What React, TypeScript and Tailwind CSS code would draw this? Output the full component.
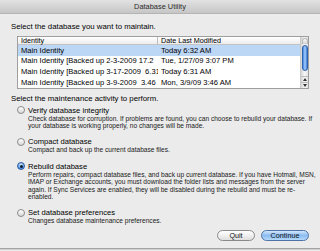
import React from "react";

function Radio({ checked }: { checked?: boolean }) {
  if (checked) {
    return (
      <span className="w-[8px] h-[8px] rounded-full border border-[#2f5c9e] bg-[radial-gradient(circle_at_50%_30%,#d4ebff,#4a8fe4_75%)] flex items-center justify-center shrink-0">
        <span className="w-[3px] h-[3px] rounded-full bg-[#0d1c33]" />
      </span>
    );
  }
  return (
    <span className="w-[8px] h-[8px] rounded-full border border-[#8a8a8a] bg-gradient-to-b from-[#ffffff] to-[#d8d8d8] shrink-0" />
  );
}

function Option({
  label,
  lines,
  checked,
  className,
}: {
  label: string;
  lines: string[];
  checked?: boolean;
  className?: string;
}) {
  return (
    <div className={className}>
      <div className="flex items-center h-[9px] pl-[6px] gap-[3px]">
        <Radio checked={checked} />
        <span className="text-[7.6px] leading-[9px] text-[#000] whitespace-nowrap">{label}</span>
      </div>
      <div className="pl-[17px] text-[6.6px] leading-[7.4px] text-[#1a1a1a] whitespace-nowrap">
        {lines.map((l, i) => (
          <div key={i}>{l}</div>
        ))}
      </div>
    </div>
  );
}

const rows = [
  ["Main Identity", "Today 6:32 AM"],
  ["Main Identity [Backed up 2-3-2009 17.2", "Tue, 1/27/09 3:07 PM"],
  ["Main Identity [Backed up 3-17-2009  6.31", "Today 6:31 AM"],
  ["Main Identity [Backed up 3-9-2009  3.46", "Mon, 3/9/09 3:46 AM"],
];

export default function App() {
  return (
    <div className="w-[320px] h-[251px] bg-[#ebebeb] flex flex-col overflow-hidden font-['Liberation_Sans',Arial,sans-serif] text-[#000]">
      {/* title bar */}
      <div className="h-[14px] shrink-0 bg-gradient-to-b from-[#e2e2e2] to-[#c6c6c6] border-b border-[#b4b4b4] flex items-center justify-center">
        <span className="text-[7.4px] leading-[9px] text-[#2a2a2a]">Database Utility</span>
      </div>

      <div className="px-[11px] flex flex-col">
        <div className="mt-[8px] text-[7.8px] leading-[9px] whitespace-nowrap">
          Select the database you want to maintain.
        </div>

        {/* table */}
        <div className="mt-[5px] ml-[6px] w-[292px] h-[53px] border border-[#9e9e9e] bg-white flex">
          <div className="flex-1 flex flex-col min-w-0">
            <div className="h-[8px] flex border-b border-[#c4c4c4] bg-gradient-to-b from-[#ffffff] to-[#ececec] text-[7.2px] leading-[7px]">
              <div className="w-[140px] shrink-0 pl-[3px] border-r border-[#bdbdbd] flex items-center">Identity</div>
              <div className="flex-1 pl-[3px] flex items-center">Date Last Modified</div>
            </div>
            {rows.map((r, i) => (
              <div
                key={i}
                className={
                  "h-[10.67px] flex items-center text-[7.6px] leading-[9px] " +
                  (i === 0 ? "bg-[#bcd6f6]" : "bg-white")
                }
              >
                <div className="w-[140px] shrink-0 pl-[3px] overflow-hidden whitespace-pre">{r[0]}</div>
                <div className="flex-1 pl-[3px] overflow-hidden whitespace-nowrap">{r[1]}</div>
              </div>
            ))}
          </div>
          {/* scrollbar */}
          <div className="w-[8px] shrink-0 flex flex-col items-center border-l border-[#c9c9c9] bg-gradient-to-r from-[#d6d6d6] via-[#f6f6f6] to-[#e4e4e4]">
            <div className="mt-[1px] w-[6px] h-[6px] rounded-t-full bg-gradient-to-b from-[#ffffff] to-[#d0d0d0] border border-[#b9b9b9] border-b-0" />
            <div className="mt-[1px] w-[6px] h-[26px] rounded-full border border-[#2f62ad] bg-gradient-to-r from-[#3f83de] via-[#a6cffc] to-[#3a7bd8]" />
            <div className="flex-1" />
            <div className="w-full h-[6px] border-t border-[#bdbdbd] flex items-center justify-center">
              <svg width="4" height="3" viewBox="0 0 4 3">
                <path d="M2 0 L4 3 L0 3 Z" fill="#333" />
              </svg>
            </div>
            <div className="w-full h-[6px] border-t border-[#bdbdbd] flex items-center justify-center">
              <svg width="4" height="3" viewBox="0 0 4 3">
                <path d="M0 0 L4 0 L2 3 Z" fill="#333" />
              </svg>
            </div>
          </div>
        </div>

        <div className="mt-[4.5px] text-[7.8px] leading-[9px] whitespace-nowrap">
          Select the maintenance activity to perform.
        </div>

        <Option
          className="mt-[3px]"
          label="Verify database integrity"
          lines={[
            "Check database for corruption. If problems are found, you can choose to rebuild your database. If",
            "your database is working properly, no changes will be made.",
          ]}
        />
        <Option
          className="mt-[8px]"
          label="Compact database"
          lines={["Compact and back up the current database files."]}
        />
        <Option
          className="mt-[8px]"
          checked
          label="Rebuild database"
          lines={[
            "Perform repairs, compact database files, and back up current database. If you have Hotmail, MSN,",
            "IMAP or Exchange accounts, you must download the folder lists and messages from the server",
            "again. If Sync Services are enabled, they will be disabled during the rebuild and must be re-",
            "enabled.",
          ]}
        />
        <Option
          className="mt-[8px]"
          label="Set database preferences"
          lines={["Changes database maintenance preferences."]}
        />

        <div className="mt-[5.3px] flex justify-end gap-[6px]">
          <button className="w-[38px] h-[11px] rounded-full border border-[#8a8a8a] bg-gradient-to-b from-[#ffffff] via-[#f0f0f0] to-[#dedede] text-[7.2px] leading-[9px] text-[#111] flex items-center justify-center">
            Quit
          </button>
          <button className="w-[48px] h-[11px] rounded-full border border-[#4f73a6] bg-gradient-to-b from-[#d2e7fc] via-[#8cbcf0] to-[#b5dafd] text-[7.2px] leading-[9px] text-[#111] flex items-center justify-center">
            Continue
          </button>
        </div>
      </div>

      <div className="mt-auto h-[1px] bg-[#a3a3a3]" />
      <div className="h-[1px] bg-[#cfcfcf] mb-[1px]" />
    </div>
  );
}
